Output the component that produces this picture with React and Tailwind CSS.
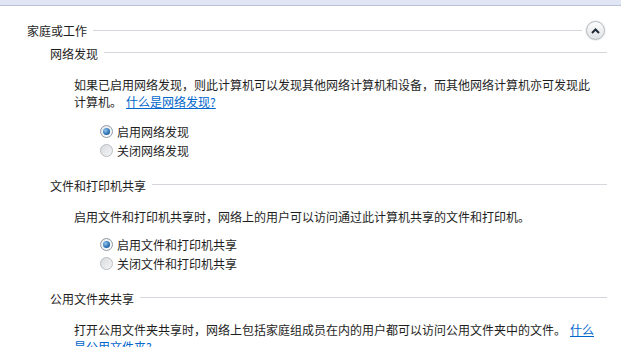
import React from "react";

function Heading({ children, indent, lineRight, className = "" }) {
  return (
    <div className={`flex items-center ${indent} ${className}`}>
      <span className="whitespace-nowrap text-[#1e1e1e]">{children}</span>
      <div className={`flex-1 ml-[6px] h-[2px] border-t border-[#d3d7dc] border-b-0 ${lineRight}`}>
        <div className="h-[1px] bg-white"></div>
      </div>
    </div>
  );
}

function Radio({ checked, label, className = "" }) {
  return (
    <div className={`flex items-center h-[19px] pl-[100px] ${className}`}>
      {checked ? (
        <span className="w-[13px] h-[13px] rounded-full border border-[#8d9aa6] bg-gradient-to-br from-[#e6e8ea] to-[#fbfcfd] flex items-center justify-center">
          <span className="w-[7px] h-[7px] rounded-full bg-[radial-gradient(circle_at_35%_35%,#8fc4ee,#2a6eb3_60%,#1d4f86)]"></span>
        </span>
      ) : (
        <span className="w-[13px] h-[13px] rounded-full border border-[#b7bcc1] bg-gradient-to-br from-[#d9dbdd] to-[#f4f5f6]"></span>
      )}
      <span className="ml-[4px] text-[#1e1e1e] whitespace-nowrap">{label}</span>
    </div>
  );
}

export default function App() {
  return (
    <div className="w-[621px] h-[347px] overflow-hidden bg-white text-[12px] leading-[17px] font-['Noto_Sans_CJK_SC','Noto_Sans',sans-serif]">
      <div className="h-[5px] bg-[#e1e6f5] border-b border-[#b8c1d6] box-content"></div>

      <div className="flex items-center mt-[15px] h-[19px] pl-[27px] pr-[16px]">
        <span className="whitespace-nowrap text-[#1e1e1e]">家庭或工作</span>
        <div className="flex-1 ml-[6px] mr-[4px] border-t border-[#d3d7dc]"></div>
        <button className="w-[19px] h-[19px] rounded-full border border-[#b4b9be] bg-gradient-to-b from-[#fdfdfd] to-[#dfe2e5] flex items-center justify-center shadow-[0_0_0_1px_#f0f1f2]">
          <svg width="9" height="6" viewBox="0 0 9 6">
            <path d="M1 5 L4.5 1.5 L8 5" fill="none" stroke="#1f2a36" strokeWidth="2" />
          </svg>
        </button>
      </div>

      <Heading indent="pl-[50px] mt-[4px] h-[18px]" lineRight="mr-[14px]">网络发现</Heading>

      <p className="pl-[74px] mt-[14px] text-[#1e1e1e]">
        如果已启用网络发现，则此计算机可以发现其他网络计算机和设备，而其他网络计算机亦可发现此
        <br />
        计算机。<a className="text-[#0066cc] underline ml-[4px]">什么是网络发现?</a>
      </p>

      <Radio checked label="启用网络发现" className="mt-[12px]" />
      <Radio label="关闭网络发现" />

      <Heading indent="pl-[50px] mt-[16px] h-[18px]" lineRight="mr-[14px]">文件和打印机共享</Heading>

      <p className="pl-[74px] mt-[14px] text-[#1e1e1e]">
        启用文件和打印机共享时，网络上的用户可以访问通过此计算机共享的文件和打印机。
      </p>

      <Radio checked label="启用文件和打印机共享" className="mt-[10px]" />
      <Radio label="关闭文件和打印机共享" />

      <Heading indent="pl-[50px] mt-[16px] h-[18px]" lineRight="mr-[14px]">公用文件夹共享</Heading>

      <p className="pl-[74px] mt-[14px] text-[#1e1e1e]">
        打开公用文件夹共享时，网络上包括家庭组成员在内的用户都可以访问公用文件夹中的文件。
        <a className="text-[#0066cc] underline ml-[4px]">
          什么
          <br />
          是公用文件夹?
        </a>
      </p>
    </div>
  );
}
